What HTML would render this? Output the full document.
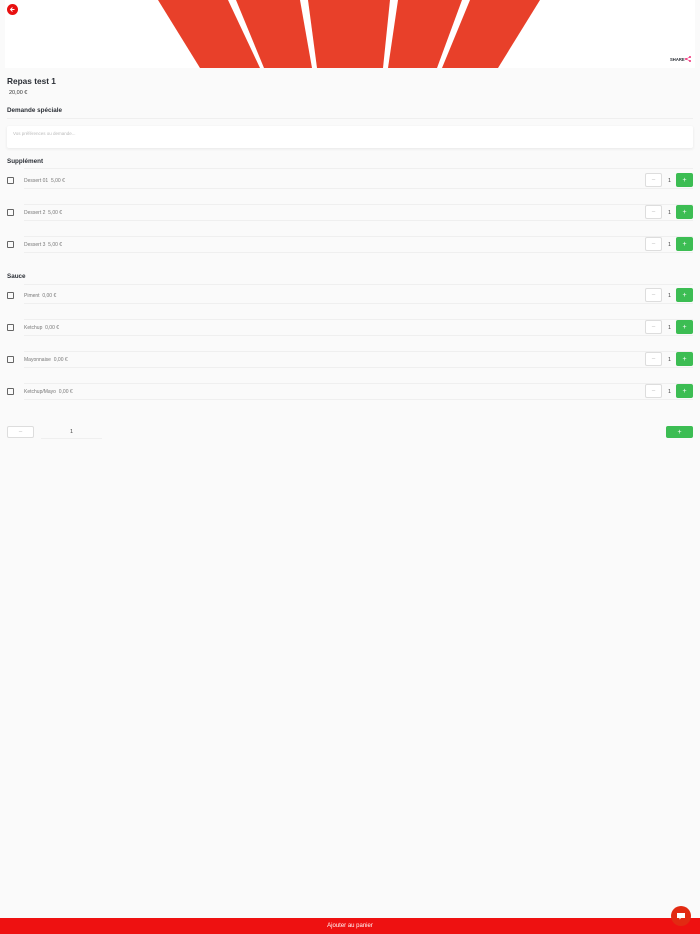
<!DOCTYPE html>
<html><head><meta charset="utf-8">
<style>
*{margin:0;padding:0;box-sizing:border-box}
body{width:700px;height:934px;background:#fafafa;font-family:"Liberation Sans",sans-serif;position:relative;overflow:hidden;color:#222}
.a{position:absolute}
.h{font-weight:bold;color:#2b2f36}
.line{position:absolute;height:1px;background:#efefef}
.cb{position:absolute;left:7px;width:7px;height:7px;border:1.2px solid #666;border-radius:1px}
.it{position:absolute;left:24px;font-size:5px;color:#777}
.mn{position:absolute;left:645px;width:17px;height:14px;border:1px solid #ddd;border-radius:2px;background:#fff;color:#bbb;font-size:6px;display:flex;align-items:center;justify-content:center}
.q{position:absolute;left:668px;font-size:5.5px;color:#444}
.pl{position:absolute;left:676px;width:17px;height:14px;background:#3cbd53;border-radius:2px;color:#fff;font-size:7px;display:flex;align-items:center;justify-content:center}
</style></head><body>
<div class="a" style="left:5px;top:0;width:690px;height:68px;background:#fff"></div>
<svg class="a" style="left:0;top:0" width="700" height="68">
<g fill="#e8402a">
<polygon points="158,0 228,0 260,68 200,68"/>
<polygon points="236,0 300,0 312,68 264,68"/>
<polygon points="308,0 390,0 383,68 317,68"/>
<polygon points="398,0 462,0 437,68 388,68"/>
<polygon points="470,0 540,0 498,68 442,68"/>
</g></svg>
<div class="a" style="left:7px;top:4px;width:11px;height:11px;border-radius:50%;background:#e81010"></div>
<svg class="a" style="left:7px;top:4px" width="11" height="11"><path d="M7.5 5.5H3.5M5.5 3.5L3.5 5.5L5.5 7.5" stroke="#fff" stroke-width="0.9" fill="none"/></svg>
<div class="a h" style="left:670px;top:57px;font-size:4.2px">SHARE</div>
<svg class="a" style="left:685px;top:56px" width="6" height="6"><circle cx="5" cy="1" r="1" fill="#f0307a"/><circle cx="1" cy="3" r="1" fill="#f0307a"/><circle cx="5" cy="5" r="1" fill="#f0307a"/><path d="M5 1L1 3L5 5" stroke="#f0307a" stroke-width="0.6" fill="none"/></svg>

<div class="a h" style="left:7px;top:75.5px;font-size:8.3px">Repas test 1</div>
<div class="a" style="left:9px;top:89.5px;font-size:5.5px;color:#333">20,00 €</div>
<div class="a h" style="left:7px;top:107px;font-size:6.3px">Demande spéciale</div>
<div class="line" style="left:7px;top:118px;width:686px"></div>
<div class="a" style="left:7px;top:126px;width:686px;height:22px;background:#fff;border-radius:2px;box-shadow:0 1px 3px rgba(0,0,0,.08)"></div>
<div class="a" style="left:13px;top:131px;font-size:4.5px;color:#bbb">Vos préférences ou demande...</div>

<div class="a h" style="left:7px;top:158px;font-size:6.3px">Supplément</div>
<div class="line" style="left:24px;top:168px;width:669px"></div>
<div class="cb" style="top:177px"></div><div class="it" style="top:178px">Dessert 01&nbsp; 5,00 €</div>
<div class="line" style="left:24px;top:188px;width:669px"></div>
<div class="mn" style="top:173px">–</div><div class="q" style="top:177.5px">1</div><div class="pl" style="top:173px">+</div>

<div class="line" style="left:24px;top:204px;width:669px"></div>
<div class="cb" style="top:209px"></div><div class="it" style="top:210px">Dessert 2&nbsp; 5,00 €</div>
<div class="line" style="left:24px;top:220px;width:669px"></div>
<div class="mn" style="top:205px">–</div><div class="q" style="top:209.5px">1</div><div class="pl" style="top:205px">+</div>

<div class="line" style="left:24px;top:236px;width:669px"></div>
<div class="cb" style="top:241px"></div><div class="it" style="top:242px">Dessert 3&nbsp; 5,00 €</div>
<div class="line" style="left:24px;top:252px;width:669px"></div>
<div class="mn" style="top:237px">–</div><div class="q" style="top:241.5px">1</div><div class="pl" style="top:237px">+</div>

<div class="a h" style="left:7px;top:273px;font-size:6.3px">Sauce</div>
<div class="line" style="left:24px;top:284px;width:669px"></div>
<div class="cb" style="top:292px"></div><div class="it" style="top:293px">Piment&nbsp; 0,00 €</div>
<div class="line" style="left:24px;top:303px;width:669px"></div>
<div class="mn" style="top:288px">–</div><div class="q" style="top:292.5px">1</div><div class="pl" style="top:288px">+</div>

<div class="line" style="left:24px;top:319px;width:669px"></div>
<div class="cb" style="top:324px"></div><div class="it" style="top:325px">Ketchup&nbsp; 0,00 €</div>
<div class="line" style="left:24px;top:335px;width:669px"></div>
<div class="mn" style="top:320px">–</div><div class="q" style="top:324.5px">1</div><div class="pl" style="top:320px">+</div>

<div class="line" style="left:24px;top:351px;width:669px"></div>
<div class="cb" style="top:356px"></div><div class="it" style="top:357px">Mayonnaise&nbsp; 0,00 €</div>
<div class="line" style="left:24px;top:367px;width:669px"></div>
<div class="mn" style="top:352px">–</div><div class="q" style="top:356.5px">1</div><div class="pl" style="top:352px">+</div>

<div class="line" style="left:24px;top:383px;width:669px"></div>
<div class="cb" style="top:388px"></div><div class="it" style="top:389px">Ketchup/Mayo&nbsp; 0,00 €</div>
<div class="line" style="left:24px;top:399px;width:669px"></div>
<div class="mn" style="top:384px">–</div><div class="q" style="top:388.5px">1</div><div class="pl" style="top:384px">+</div>

<div class="mn" style="left:7px;top:426px;width:27px;height:12px">–</div>
<div class="a" style="left:70px;top:429px;font-size:5.5px;color:#444">1</div>
<div class="line" style="left:41px;top:438px;width:61px"></div>
<div class="pl" style="left:666px;top:426px;width:27px;height:12px">+</div>

<div class="a" style="left:0;top:918px;width:700px;height:16px;background:#ee1111;color:#fff;font-size:6px;text-align:center;line-height:16px">Ajouter au panier</div>
<div class="a" style="left:671px;top:906px;width:20px;height:20px;border-radius:50%;background:#e22a12"></div>
<svg class="a" style="left:676px;top:911px" width="10" height="10"><path d="M1 2H9V7H5L3.5 8.5V7H1Z" fill="#fff"/></svg>
</body></html>
